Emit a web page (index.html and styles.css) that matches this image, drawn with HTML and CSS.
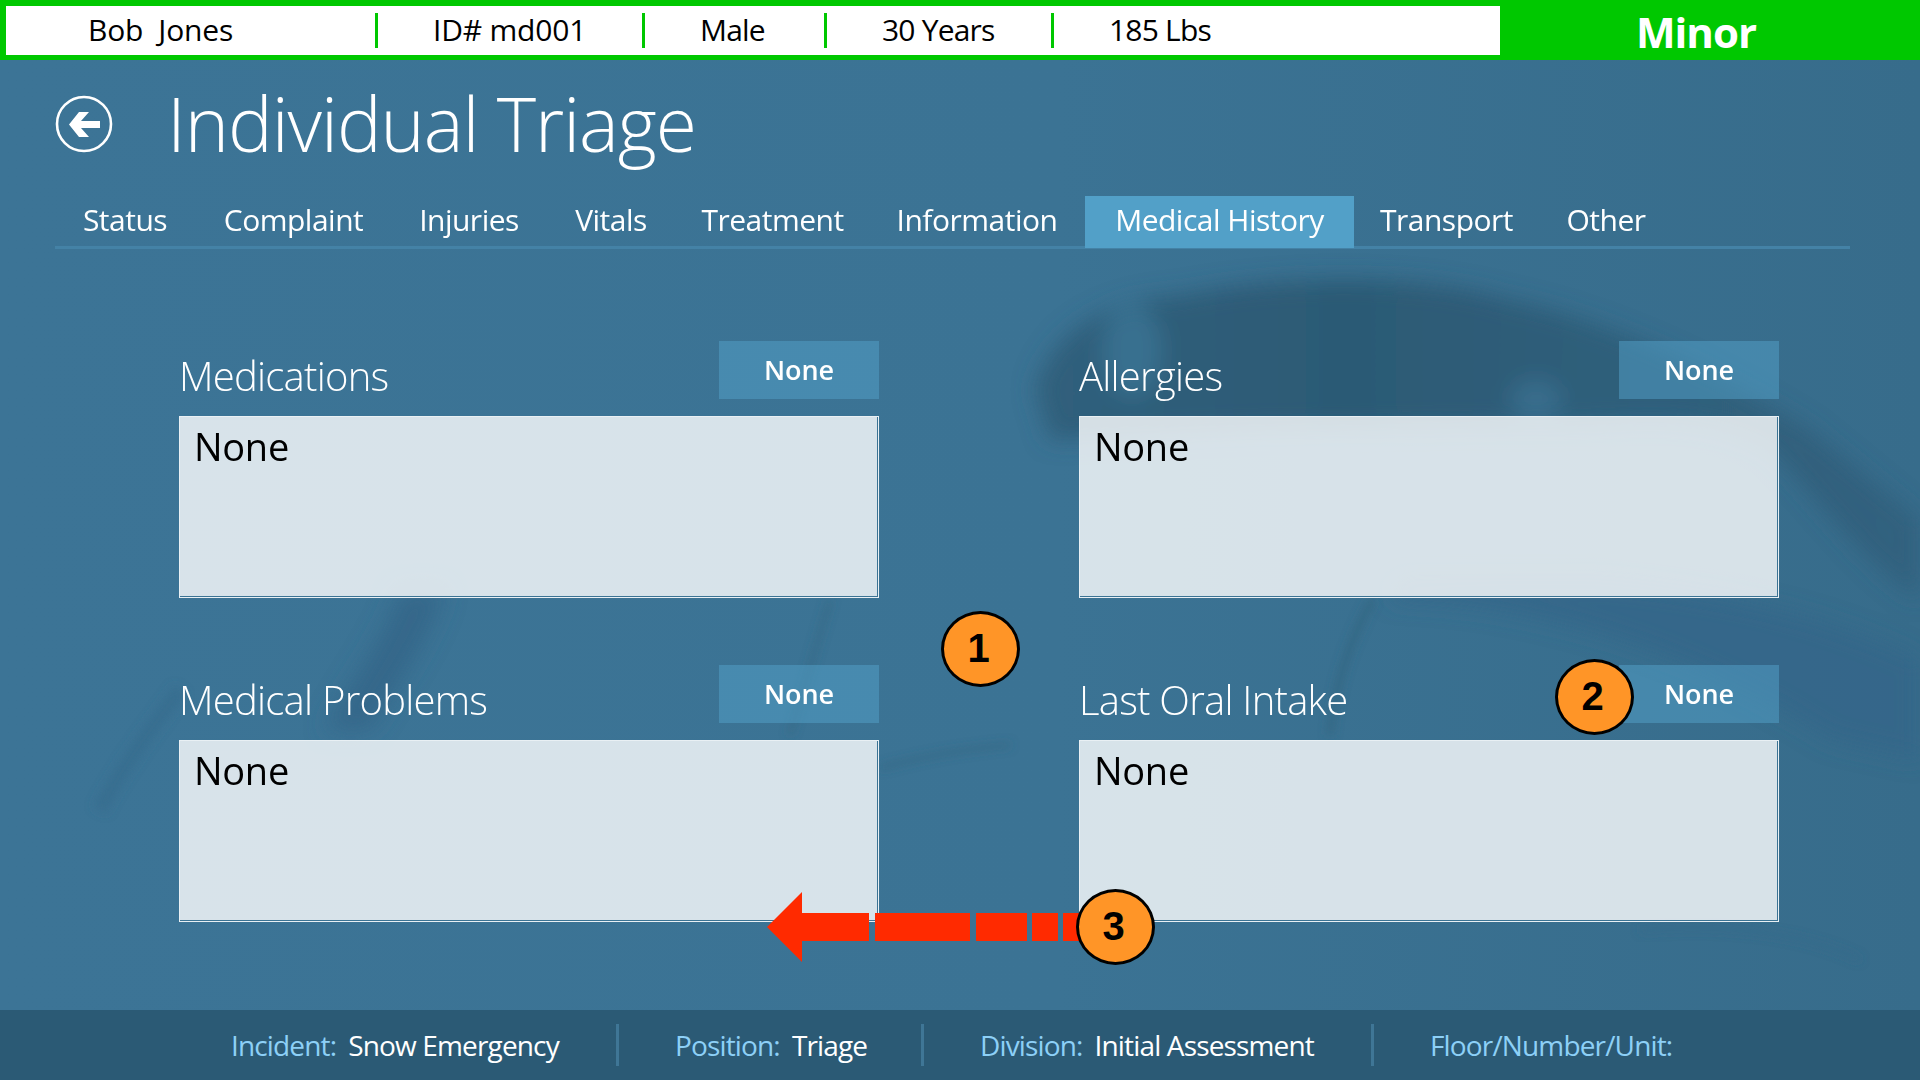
FILE: index.html
```html
<!DOCTYPE html>
<html lang="en">
<head>
  <meta charset="UTF-8" />
  <title>Individual Triage</title>
  <link rel="stylesheet" href="styles.css">
</head>
<body>
  <!-- blurred photo behind the page -->
  <svg class="backdrop" viewBox="0 0 1920 1080" aria-hidden="true">
    <defs>
      <linearGradient id="wash" x1="0" y1="0" x2="1" y2="0">
        <stop offset="0" stop-color="#3c7496"/>
        <stop offset="0.55" stop-color="#3b7394"/>
        <stop offset="1" stop-color="#376c8b"/>
      </linearGradient>
      <linearGradient id="swoosh" x1="0" y1="0" x2="1" y2="0">
        <stop offset="0" stop-color="#30607c"/>
        <stop offset="0.35" stop-color="#2c5a75"/>
        <stop offset="0.7" stop-color="#2f5f7b"/>
        <stop offset="1" stop-color="#31627f"/>
      </linearGradient>
      <filter id="soft" x="-10%" y="-10%" width="120%" height="120%"><feGaussianBlur stdDeviation="11"/></filter>
      <filter id="softer" x="-20%" y="-20%" width="140%" height="140%"><feGaussianBlur stdDeviation="5"/></filter>
    </defs>
    <rect width="1920" height="1080" fill="url(#wash)"/>
    <g filter="url(#soft)">
      <path d="M1035 390 C1050 335 1100 300 1180 295 C1300 272 1430 276 1510 300 C1620 322 1740 385 1810 430 L1920 520 L1920 600 C1860 560 1820 500 1770 450 C1700 410 1640 425 1550 425 L1250 430 L1050 440 Z" fill="url(#swoosh)"/>
      <ellipse cx="1132" cy="350" rx="30" ry="46" fill="#39708f"/>
      <ellipse cx="1536" cy="400" rx="26" ry="20" fill="#386d8c"/>
      <path d="M1390 600 C1500 600 1680 640 1830 740 L1920 760 L1920 660 C1820 610 1700 590 1600 580 L1400 580 Z" fill="#33668a" opacity="0.8"/>
      <path d="M400 590 C385 640 350 680 325 730 L370 730 C400 680 430 640 445 590 Z" fill="#34688a"/>
    </g>
    <g filter="url(#softer)" fill="none" stroke="#33657f">
      <path d="M1372 600 C1345 650 1335 690 1330 735" stroke-width="5"/>
      <path d="M830 600 C815 650 800 700 790 735" stroke-width="3"/>
      <path d="M880 768 C930 755 960 750 1010 745" stroke-width="3"/>
      <path d="M180 690 C150 730 120 770 100 810" stroke-width="14" stroke="#386e90"/>
      <path d="M1640 930 C1720 925 1800 930 1860 960" stroke-width="3" stroke="#35698a"/>
    </g>
  </svg>

  <header class="status-bar">
    <div class="patient">
      <span class="patient-item patient-name">Bob&nbsp; Jones</span>
      <span class="patient-item patient-id">ID# md001</span>
      <span class="patient-item">Male</span>
      <span class="patient-item">30 Years</span>
      <span class="patient-item patient-last">185 Lbs</span>
    </div>
    <div class="level">Minor</div>
  </header>

  <main class="page">
    <div class="title-row">
      <svg class="back" viewBox="0 0 60 60" aria-hidden="true">
        <circle cx="30" cy="30" r="27" fill="none" stroke="#fff" stroke-width="2.6"/>
        <path d="M15 30.5 L25 18 L35 18 L27 27 L46 27 L46 34 L27 34 L35 43 L25 43 Z" fill="#fff"/>
      </svg>
      <h1>Individual Triage</h1>
    </div>

    <nav class="tabs">
      <a class="tab">Status</a>
      <a class="tab">Complaint</a>
      <a class="tab">Injuries</a>
      <a class="tab">Vitals</a>
      <a class="tab">Treatment</a>
      <a class="tab">Information</a>
      <a class="tab tab-active">Medical History</a>
      <a class="tab">Transport</a>
      <a class="tab">Other</a>
    </nav>

    <section class="panels">
      <div class="panel">
        <div class="panel-head"><span class="panel-label">Medications</span><button class="none-btn">None</button></div>
        <div class="panel-box">None</div>
      </div>
      <div class="panel">
        <div class="panel-head"><span class="panel-label">Allergies</span><button class="none-btn">None</button></div>
        <div class="panel-box">None</div>
      </div>
      <div class="panel">
        <div class="panel-head"><span class="panel-label">Medical Problems</span><button class="none-btn">None</button></div>
        <div class="panel-box">None</div>
      </div>
      <div class="panel">
        <div class="panel-head"><span class="panel-label">Last Oral Intake</span><button class="none-btn">None</button></div>
        <div class="panel-box">None</div>
      </div>
    </section>
  </main>

  <footer class="footer">
    <div class="footer-item"><span class="footer-key">Incident:</span><span>Snow Emergency</span></div>
    <div class="footer-item"><span class="footer-key">Position:</span><span>Triage</span></div>
    <div class="footer-item"><span class="footer-key">Division:</span><span>Initial Assessment</span></div>
    <div class="footer-item"><span class="footer-key">Floor/Number/Unit:</span></div>
  </footer>

  <!-- annotation layer -->
  <svg class="swipe" viewBox="0 0 330 72" aria-hidden="true">
    <path d="M0 35 L35 0 L35 21 L102 21 L102 49 L35 49 L35 70 Z" fill="#ff2a00"/>
    <rect x="108" y="21" width="95" height="28" fill="#ff2a00"/>
    <rect x="209" y="21" width="51" height="28" fill="#ff2a00"/>
    <rect x="265" y="21" width="26" height="28" fill="#ff2a00"/>
    <rect x="296" y="21" width="30" height="28" fill="#ff2a00"/>
  </svg>
  <div class="callout callout-1">1</div>
  <div class="callout callout-2">2</div>
  <div class="callout callout-3">3</div>
</body>
</html>
```

FILE: styles.css
```css
html, body {
  margin: 0;
  padding: 0;
}
body {
  position: relative;
  width: 1920px;
  height: 1080px;
  overflow: hidden;
  display: flex;
  flex-direction: column;
  font-family: "Open Sans", "Noto Sans", sans-serif;
  color: #fff;
  background: #3b7394;
}
.backdrop {
  position: absolute;
  top: 0;
  left: 0;
  width: 1920px;
  height: 1080px;
}

/* top bar */
.status-bar {
  position: relative;
  display: flex;
  height: 60px;
  background: #00c800;
}
.patient {
  display: grid;
  grid-template-columns: 372px 267px 182px 227px 1fr;
  align-items: center;
  width: 1494px;
  margin: 6px 0 5px 6px;
  background: #fff;
  color: #000;
  font-size: 30px;
  letter-spacing: -0.8px;
}
.patient-item {
  box-sizing: border-box;
  height: 35px;
  padding-left: 55px;
  line-height: 34px;
  border-right: 3px solid #00c800;
}
.patient-name {
  padding-left: 82px;
  letter-spacing: -0.2px;
}
.patient-id {
  letter-spacing: -0.2px;
}
.patient-last {
  border-right: none;
}
.level {
  flex: 1;
  padding-right: 28px;
  text-align: center;
  font-size: 42px;
  font-weight: 700;
  line-height: 64px;
  letter-spacing: -1px;
}

/* title + tabs */
.page {
  position: relative;
  flex: 1;
  padding-left: 55px;
}
.title-row {
  display: flex;
  align-items: center;
  height: 128px;
}
.back {
  width: 60px;
  height: 60px;
  margin-left: -1px;
}
h1 {
  margin: -2px 0 0 53px;
  font-size: 75px;
  font-weight: 300;
  letter-spacing: -1.05px;
}
.tabs {
  display: grid;
  grid-template-columns: 140px 197px 154px 130px 193px 216px 269px 185px 134px;
  justify-content: start;
  box-sizing: border-box;
  width: 1795px;
  height: 53px;
  margin-top: 8px;
  border-bottom: 3px solid #4482a6;
}
.tab {
  height: 52px;
  font-size: 30px;
  line-height: 48px;
  letter-spacing: -0.5px;
  text-align: center;
}
.tab-active {
  background: #52a0c8;
}

/* the four note boxes */
.panels {
  display: grid;
  grid-template-columns: 700px 700px;
  column-gap: 200px;
  row-gap: 67px;
  margin: 92px 0 0 124px;
}
.panel-head {
  display: flex;
  justify-content: space-between;
  align-items: flex-start;
  height: 58px;
  margin-bottom: 17px;
}
.panel-label {
  margin-top: 10px;
  font-size: 40px;
  font-weight: 300;
  line-height: 50px;
  letter-spacing: -0.75px;
}
.none-btn {
  width: 160px;
  height: 58px;
  padding: 0 0 2px;
  border: none;
  background: rgba(84, 161, 202, 0.5);
  color: #fff;
  font-family: inherit;
  font-size: 27px;
  font-weight: 600;
  letter-spacing: -0.1px;
}
.panel-box {
  box-sizing: border-box;
  height: 182px;
  padding: 3px 14px;
  border: 1px solid #e9f0f4;
  background: rgba(255, 255, 255, 0.8);
  box-shadow: inset -1px -1px 0 #3b7394;
  color: #000;
  font-size: 38px;
  line-height: 52px;
  letter-spacing: -0.3px;
}

/* bottom bar */
.footer {
  position: relative;
  display: grid;
  grid-template-columns: 445px 305px 450px 1fr;
  align-items: center;
  height: 70px;
  padding-left: 174px;
  background: #2b5a75;
  font-size: 28px;
  letter-spacing: -0.85px;
}
.footer-item {
  box-sizing: border-box;
  display: flex;
  align-items: center;
  height: 42px;
  padding-left: 56px;
  border-right: 3px solid #3f7696;
}
.footer-item:first-child {
  padding-left: 57px;
}
.footer-item:last-child {
  border-right: none;
}
.footer-key {
  margin-right: 12px;
  color: #8dd0f7;
}

/* numbered callouts over the screen */
.callout {
  position: absolute;
  box-sizing: border-box;
  width: 79px;
  height: 76px;
  padding-right: 4px;
  border: 3px solid #000;
  border-radius: 50%;
  background: #ff9527;
  color: #000;
  font-family: "Liberation Sans", Arial, sans-serif;
  font-size: 40px;
  font-weight: 700;
  line-height: 68px;
  text-align: center;
}
.callout-1 {
  left: 941px;
  top: 611px;
}
.callout-2 {
  left: 1555px;
  top: 659px;
}
.callout-3 {
  left: 1076px;
  top: 889px;
}
.swipe {
  position: absolute;
  left: 767px;
  top: 892px;
  width: 330px;
  height: 72px;
}
```
